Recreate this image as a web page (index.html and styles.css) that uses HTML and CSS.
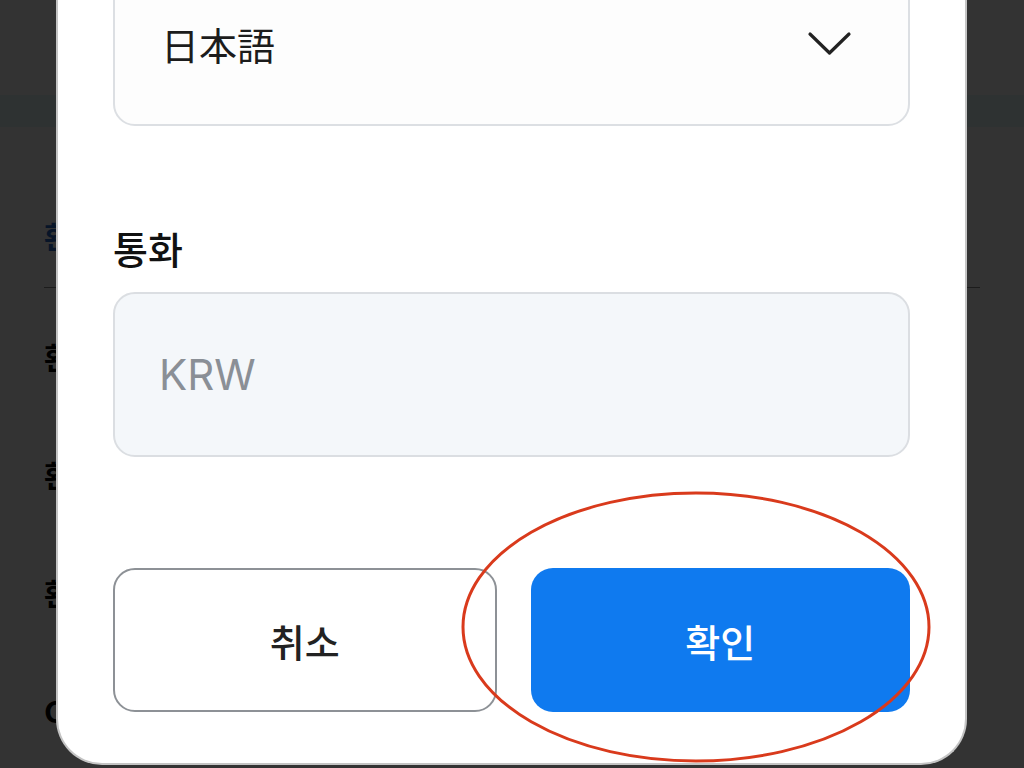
FILE: index.html
```html
<!DOCTYPE html>
<html lang="ko">
<head>
<meta charset="utf-8">
<title>설정</title>
<link rel="stylesheet" href="styles.css">
</head>
<body>
<div class="page">
  <div class="page-top"></div>
  <div class="page-band"></div>
  <div class="page-tabs"><span class="tab">환율</span></div>
  <div class="page-rule"></div>
  <ul class="page-list">
    <li>환</li>
    <li>환</li>
    <li>환</li>
    <li>C</li>
  </ul>
</div>
<div class="scrim"></div>

<div class="sheet">
  <div class="select">
    <span class="select-value">日本語</span>
    <svg class="chevron" width="46" height="28" viewBox="0 0 46 28" aria-hidden="true">
      <polyline points="3,4 22.5,23 42,4" fill="none" stroke="#222" stroke-width="3.2" stroke-linecap="round" stroke-linejoin="round"/>
    </svg>
  </div>

  <div class="field-label">통화</div>
  <div class="input">KRW</div>

  <div class="actions">
    <button class="btn btn-cancel" type="button">취소</button>
    <button class="btn btn-ok" type="button">확인</button>
  </div>
</div>

<svg class="annotation" width="1024" height="768" viewBox="0 0 1024 768" aria-hidden="true">
  <ellipse cx="696" cy="627" rx="233" ry="134" fill="none" stroke="#d93a1c" stroke-width="3"/>
</svg>
</body>
</html>
```

FILE: styles.css
```css
* { box-sizing: border-box; }

html, body {
  margin: 0;
  padding: 0;
}

body {
  width: 1024px;
  height: 768px;
  overflow: hidden;
  position: relative;
  background: #ffffff;
  font-family: Inter, "Noto Sans CJK KR", "Noto Sans", sans-serif;
  color: #161616;
}

/* background page (dimmed) */
.page {
  height: 768px;
  overflow: hidden;
  padding: 0 44px;
}
.page-top { height: 95px; }
.page-band {
  height: 32px;
  margin: 0 -44px;
  background: #e6f8f8;
}
.page-tabs {
  padding-top: 86px;
  height: 160px;
  font-size: 30px;
  font-weight: 700;
  color: #2a6cc8;
  font-family: "Noto Sans CJK KR", sans-serif;
}
.page-rule {
  height: 1px;
  background: #8a8a8a;
}
.page-list {
  list-style: none;
  margin: 0;
  padding: 46px 0 0;
  font-family: "Noto Sans CJK KR", sans-serif;
  font-size: 30px;
  font-weight: 700;
  line-height: 44px;
  color: #000;
}
.page-list li {
  height: 118px;
}
.page-list li:last-child {
  height: auto;
}

.scrim {
  position: absolute;
  inset: 0;
  background: rgba(0, 0, 0, 0.8);
}

/* bottom sheet dialog */
.sheet {
  position: absolute;
  left: 56px;
  width: 911px;
  bottom: 3px;
  background: #ffffff;
  border: 2px solid #c4c4c4;
  border-top: 0;
  border-radius: 0 0 46px 46px;
  padding: 0 55px 51px;
  display: flex;
  flex-direction: column;
}

.select {
  height: 165px;
  border: 2px solid #dcdfe3;
  border-radius: 22px;
  background: #fdfdfd;
  display: flex;
  align-items: center;
  justify-content: space-between;
  padding: 0 55px 0 46px;
}
.select-value {
  font-family: "Noto Sans CJK JP", sans-serif;
  font-size: 38px;
  color: #1c1c1c;
  line-height: 1;
}
.chevron { display: block; }

.field-label {
  margin-top: 98px;
  font-family: "Noto Sans CJK KR", sans-serif;
  font-size: 38px;
  font-weight: 500;
  line-height: 48px;
  color: #111;
}

.input {
  margin-top: 20px;
  height: 165px;
  border: 2px solid #dbdee2;
  border-radius: 22px;
  background: #f4f7fa;
  display: flex;
  align-items: center;
  padding: 0 44px;
  font-family: Inter, sans-serif;
  font-size: 42px;
  color: #8a8f96;
}

.actions {
  margin-top: 111px;
  display: flex;
  gap: 34px;
}

.btn {
  flex: 1;
  height: 144px;
  border-radius: 22px;
  font-family: "Noto Sans CJK KR", sans-serif;
  font-size: 38px;
  font-weight: 500;
  padding: 0;
  cursor: pointer;
}
.btn-cancel {
  background: #ffffff;
  border: 2px solid #8d9196;
  color: #222;
}
.btn-ok {
  background: #0f7aef;
  border: 0;
  color: #ffffff;
}

.annotation {
  position: absolute;
  left: 0;
  top: 0;
  pointer-events: none;
}
```
